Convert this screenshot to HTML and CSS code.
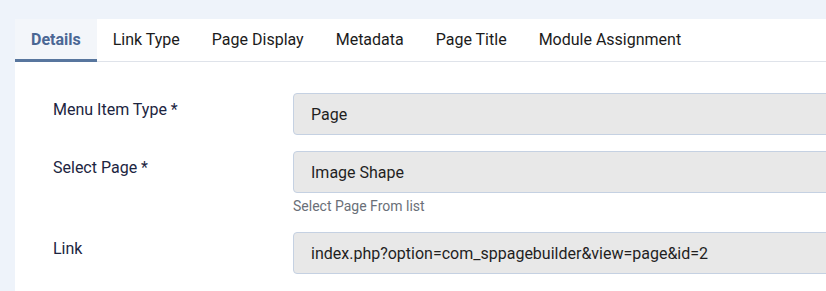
FILE: index.html
```html
<!DOCTYPE html>
<html lang="en">
<head>
<meta charset="utf-8">
<title>Menu Item</title>
<link rel="stylesheet" href="styles.css">
</head>
<body>
<div class="panel">
  <nav class="tabs">
    <a class="tab active">Details</a>
    <a class="tab">Link Type</a>
    <a class="tab">Page Display</a>
    <a class="tab">Metadata</a>
    <a class="tab">Page Title</a>
    <a class="tab">Module Assignment</a>
  </nav>
  <div class="form">
    <div class="row">
      <label class="label">Menu Item Type *</label>
      <div class="control">
        <div class="input">Page</div>
      </div>
    </div>
    <div class="row">
      <label class="label">Select Page *</label>
      <div class="control">
        <div class="input">Image Shape</div>
        <div class="help">Select Page From list</div>
      </div>
    </div>
    <div class="row">
      <label class="label">Link</label>
      <div class="control">
        <div class="input">index.php?option=com_sppagebuilder&amp;view=page&amp;id=2</div>
      </div>
    </div>
  </div>
</div>
</body>
</html>
```

FILE: styles.css
```css
html, body {
  margin: 0;
  padding: 0;
}
body {
  background: #eef3fa;
  font-family: Roboto, "Liberation Sans", sans-serif;
  color: #1c2541;
  overflow: hidden;
  padding: 19px 0 0 15px;
  height: 291px;
  box-sizing: border-box;
}
.panel {
  background: #fff;
  height: 272px;
  overflow: hidden;
}
.tabs {
  display: flex;
  border-bottom: 1px solid #dfe3ea;
  height: 43px;
  box-sizing: border-box;
}
.tab {
  display: flex;
  align-items: center;
  padding: 0 16px;
  font-size: 16px;
  color: #1b1b1b;
  border-bottom: 3px solid transparent;
  margin-bottom: -1px;
}
.tab.active {
  background: #f3f6fa;
  color: #4a6794;
  font-weight: 700;
  border-bottom-color: #58769e;
}
.form {
  padding: 31px 0 0 38px;
}
.row {
  display: flex;
  margin-bottom: 16px;
}
.label {
  width: 240px;
  flex: none;
  font-size: 16px;
  line-height: 24px;
  padding-top: 5px;
  color: #1c2541;
}
.control {
  flex: 1;
  margin-right: -20px;
}
.input {
  height: 42px;
  box-sizing: border-box;
  background: #e8e8e8;
  border: 1px solid #c5d1e2;
  border-radius: 4px;
  padding: 0 17px;
  display: flex;
  align-items: center;
  font-size: 16px;
  color: #1f1f1f;
}
.help {
  font-size: 14px;
  line-height: 20px;
  margin-top: 3px;
  color: #6a6f78;
}
```
